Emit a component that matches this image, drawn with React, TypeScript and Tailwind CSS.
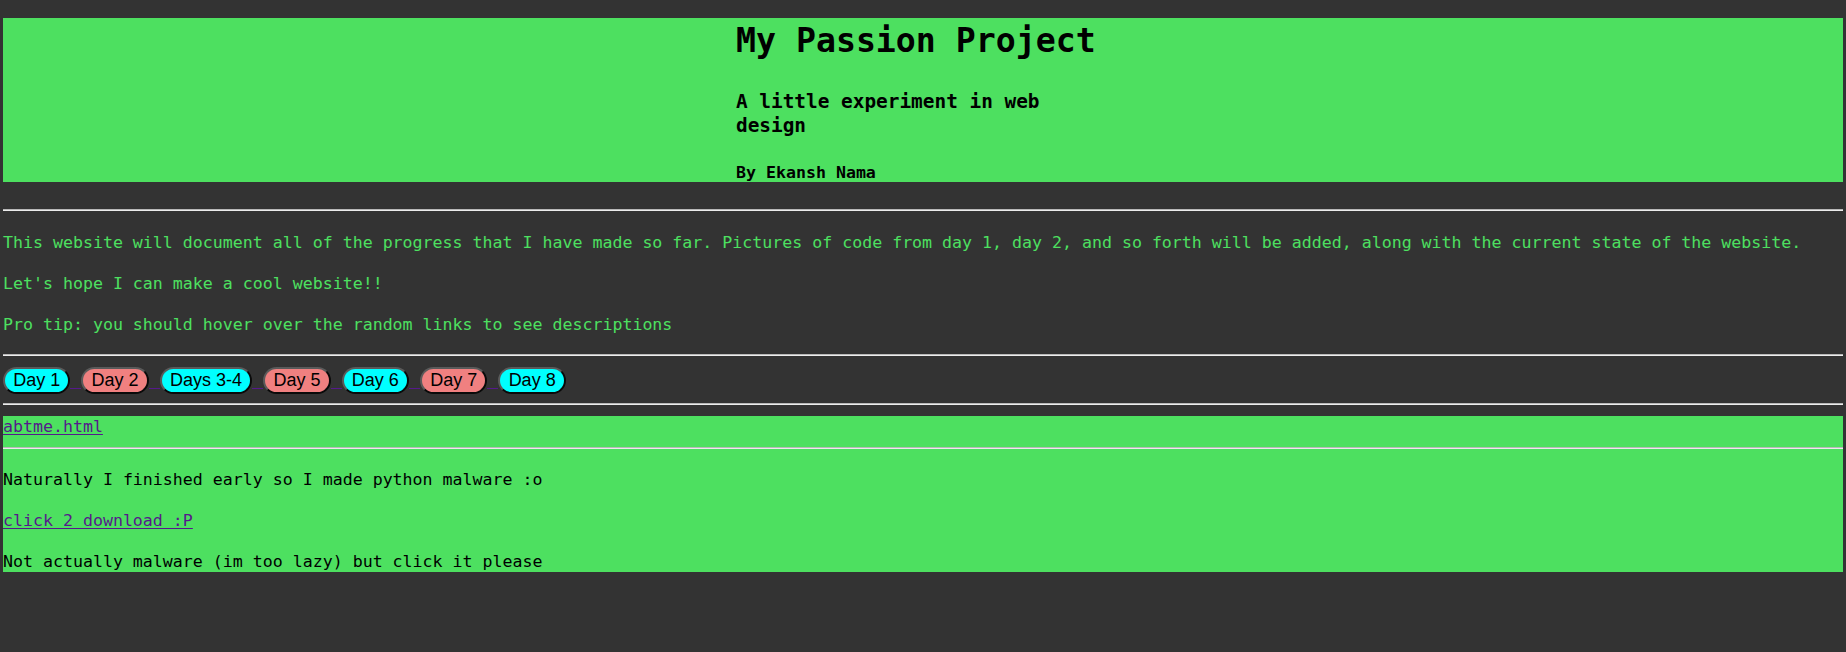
import React from "react";

function Hr({ className = "" }: { className?: string }) {
  return (
    <div className={`h-[2px] border-t border-b border-t-[#b8b8b8] border-b-[#ececec] ${className}`} />
  );
}

const days: { label: string; color: string }[] = [
  { label: "Day 1", color: "cyan" },
  { label: "Day 2", color: "coral" },
  { label: "Days 3-4", color: "cyan" },
  { label: "Day 5", color: "coral" },
  { label: "Day 6", color: "cyan" },
  { label: "Day 7", color: "coral" },
  { label: "Day 8", color: "cyan" },
];

function DayButton({ label, color }: { label: string; color: string }) {
  return (
    <button
      className={`h-[27px] px-[8.2px] rounded-full border-2 border-t-[#5a5a5a] border-l-[#5a5a5a] border-r-[#0a0a0a] border-b-[#0a0a0a] text-black text-[18px] leading-[21px] font-['Liberation_Sans',Arial,sans-serif] ${
        color === "cyan" ? "bg-[#00ffff]" : "bg-[#f08080]"
      }`}
    >
      {label}
    </button>
  );
}

export default function App() {
  return (
    <div className="min-h-[652px] bg-[#333333] px-[3px] pt-[18px] font-['DejaVu_Sans_Mono',monospace] text-[16.6px] leading-[20px]">
      <header className="h-[164px] bg-[#4de060] pt-[4px] text-black">
        <div className="mx-auto w-[374px]">
          <h1 className="text-[33.2px] leading-[38px] font-bold">My Passion Project</h1>
          <h3 className="mt-[29.5px] text-[19.4px] leading-[24px] font-bold">
            A little experiment in web design
          </h3>
          <h4 className="mt-[25.5px] font-bold">By Ekansh Nama</h4>
        </div>
      </header>

      <Hr className="mt-[27px]" />

      <div className="mt-[21.5px] flex flex-col gap-[21px] text-[#4de060]">
        <p>
          This website will document all of the progress that I have made so far. Pictures of code from day 1, day 2, and so forth will be added, along with the current state of the website.
        </p>
        <p>Let&apos;s hope I can make a cool website!!</p>
        <p>Pro tip: you should hover over the random links to see descriptions</p>
      </div>

      <Hr className="mt-[19.75px]" />

      <div className="mt-[11px] flex h-[27px] items-start">
        {days.map((d, i) => (
          <React.Fragment key={d.label}>
            <DayButton label={d.label} color={d.color} />
            {i < days.length - 1 && (
              <span className="w-[11px] h-[27px] flex flex-col">
                <span className="mt-[21px] h-px bg-[#551a8b]" />
              </span>
            )}
          </React.Fragment>
        ))}
      </div>

      <Hr className="mt-[9px]" />

      <section className="mt-[11px] h-[156px] bg-[#4de060] pt-[1px] text-black">
        <a href="#" className="text-[#551a8b] underline decoration-[#551a8b] underline-offset-[1.5px]">
          abtme.html
        </a>
        <Hr className="mt-[10px]" />
        <p className="mt-[21px]">Naturally I finished early so I made python malware :o</p>
        <p className="mt-[21px]">
          <a href="#" className="text-[#551a8b] underline decoration-[#551a8b] underline-offset-[1.5px]">
            click 2 download :P
          </a>
        </p>
        <p className="mt-[20.5px]">Not actually malware (im too lazy) but click it please</p>
      </section>
    </div>
  );
}
